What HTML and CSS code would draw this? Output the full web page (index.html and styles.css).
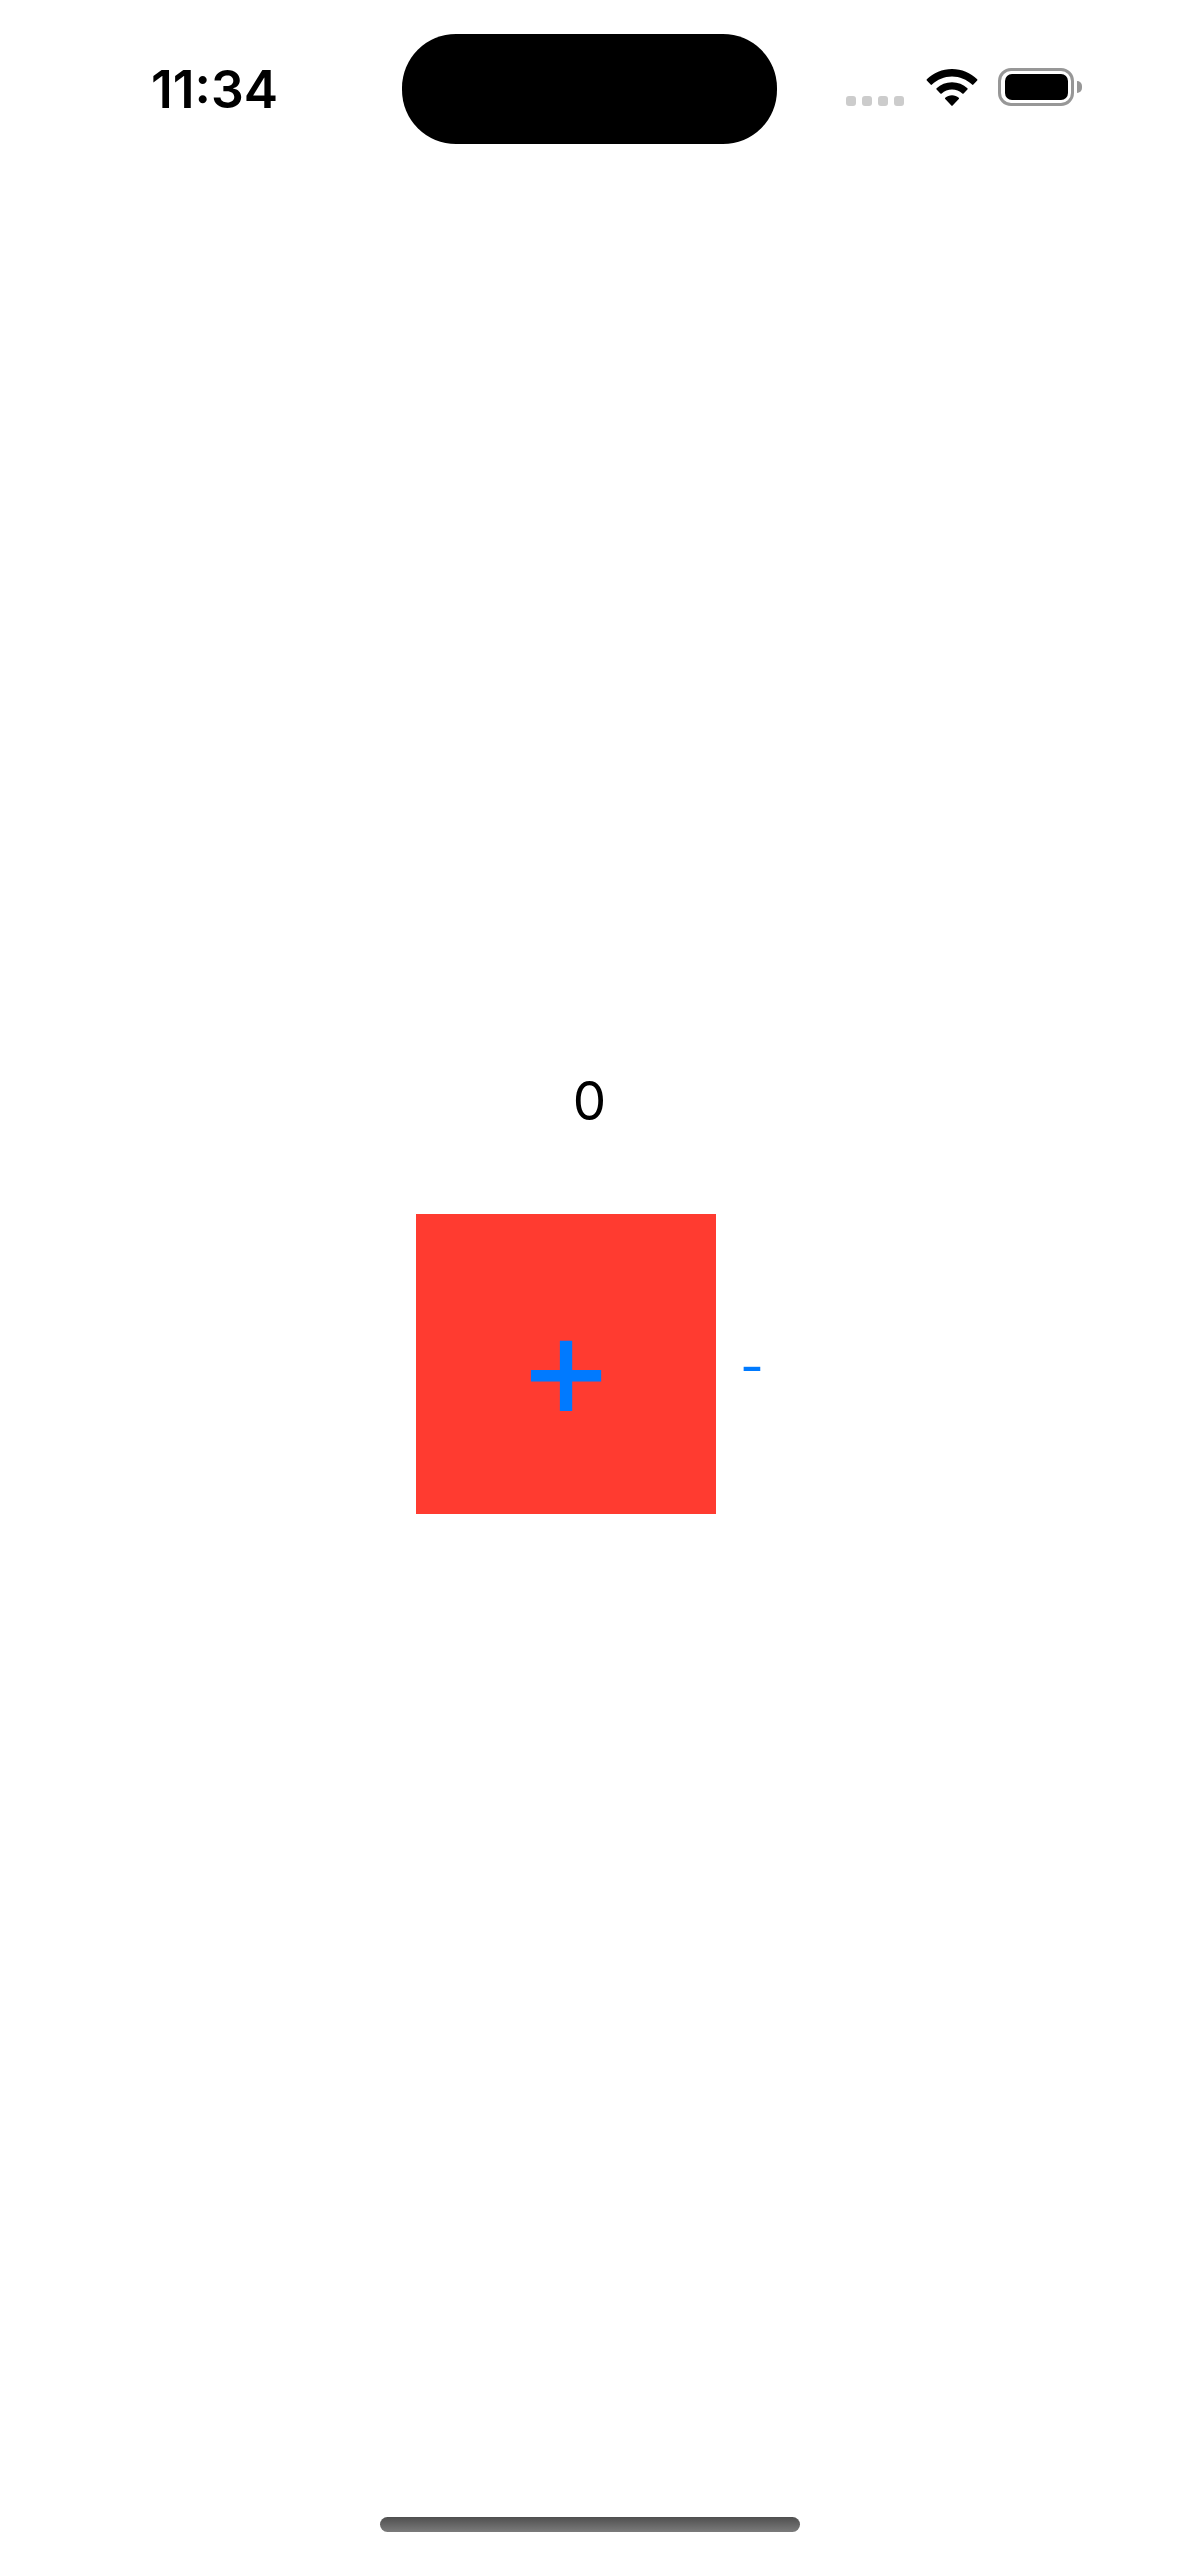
FILE: index.html
```html
<!DOCTYPE html>
<html lang="en">
<head>
<meta charset="utf-8">
<title>Counter</title>
<link rel="stylesheet" href="styles.css">
</head>
<body>
<div class="screen">
  <header class="status-bar">
    <span class="time">11:34</span>
    <div class="island"></div>
    <div class="status-icons">
      <div class="signal"><i></i><i></i><i></i><i></i></div>
      <svg class="wifi" width="52" height="37" viewBox="0 0 50 36">
        <path d="M25 0C34.500 0 43 3.700 49.500 10C49.900 10.400 49.900 10.900 49.500 11.300L45.800 15.200C45.400 15.600 44.900 15.600 44.500 15.200C39.300 10.300 32.500 7.300 25 7.300C17.500 7.300 10.700 10.300 5.500 15.200C5.100 15.600 4.600 15.600 4.200 15.200L.5 11.300C.1 10.900 .1 10.400 .5 10C7 3.700 15.500 0 25 0Z" fill="#000"/>
        <path d="M25 12.800C30.800 12.800 36 15 40 18.700C40.400 19.100 40.400 19.600 40 20L36.300 23.900C35.900 24.300 35.400 24.300 35 23.900C32.300 21.500 28.800 20 25 20C21.200 20 17.700 21.500 15 23.900C14.600 24.300 14.100 24.300 13.700 23.900L10 20C9.600 19.600 9.600 19.100 10 18.700C14 15 19.200 12.800 25 12.800Z" fill="#000"/>
        <path d="M25 25.500C27.500 25.500 29.800 26.400 31.600 28C32 28.400 32 28.900 31.600 29.300L25.600 35.600C25.200 36 24.800 36 24.400 35.600L18.400 29.300C18 28.900 18 28.400 18.400 28C20.200 26.400 22.500 25.500 25 25.500Z" fill="#000"/>
      </svg>
      <div class="battery"><div class="battery-body"><div class="battery-fill"></div></div><div class="battery-cap"></div></div>
    </div>
  </header>
  <main class="content">
    <div class="count">0</div>
    <div class="buttons">
      <button class="btn btn-plus">+</button>
      <button class="btn btn-minus">-</button>
    </div>
  </main>
  <footer class="home-area"><div class="home-bar"></div></footer>
</div>
</body>
</html>
```
FILE: styles.css
```css
* { box-sizing: border-box; }
html, body { margin: 0; padding: 0; background: #fff; }
.screen { width: 1179px; height: 2556px; display: flex; flex-direction: column; overflow: hidden; }
.status-bar { height: 144px; padding: 34px 0 0 0; display: flex; align-items: flex-start; }
.time { width: 402px; padding: 31px 0 0 151px; font: 600 51.500px/48px Inter, sans-serif; color: #000; }
.island { width: 375px; height: 110px; border-radius: 54px; background: #000; }
.status-icons { display: flex; align-items: flex-start; padding: 35px 0 0 69px; }
.signal { display: flex; gap: 6px; padding-top: 27px; }
.signal i { display: block; width: 10px; height: 10px; border-radius: 3px; background: #ccc; }
.wifi { margin: 0 0 0 22px; display: block; }
.battery { display: flex; align-items: center; margin: -1px 0 0 20px; }
.battery-body { width: 76px; height: 38px; border: 3px solid #979797; border-radius: 13px; padding: 3px 3.500px; }
.battery-fill { width: 100%; height: 100%; background: #000; border-radius: 7px; }
.battery-cap { width: 5px; height: 12px; background: #979797; border-radius: 0 6px 6px 0; margin-left: 3px; }
.content { flex: 1; display: flex; flex-direction: column; align-items: center; padding-top: 927px; }
.count { font: 380 53px/60px Inter, sans-serif; color: #000; }
.buttons { display: flex; align-items: flex-start; gap: 24px; margin-top: 83px; }
.btn { border: 0; padding: 0; background: none; color: #007aff; font-family: Inter, sans-serif; }
.btn-plus { width: 300px; height: 300px; background: #ff3b30; font-size: 149px; font-weight: 380; line-height: 294px; }
.btn-minus { width: 23px; height: 60px; margin-top: 123px; font-size: 52px; line-height: 60px; }
.home-area { height: 39px; display: flex; justify-content: center; }
.home-bar { width: 420px; height: 15px; border-radius: 8px; background: linear-gradient(#4f4f4f, #7b7b7b); }
```
